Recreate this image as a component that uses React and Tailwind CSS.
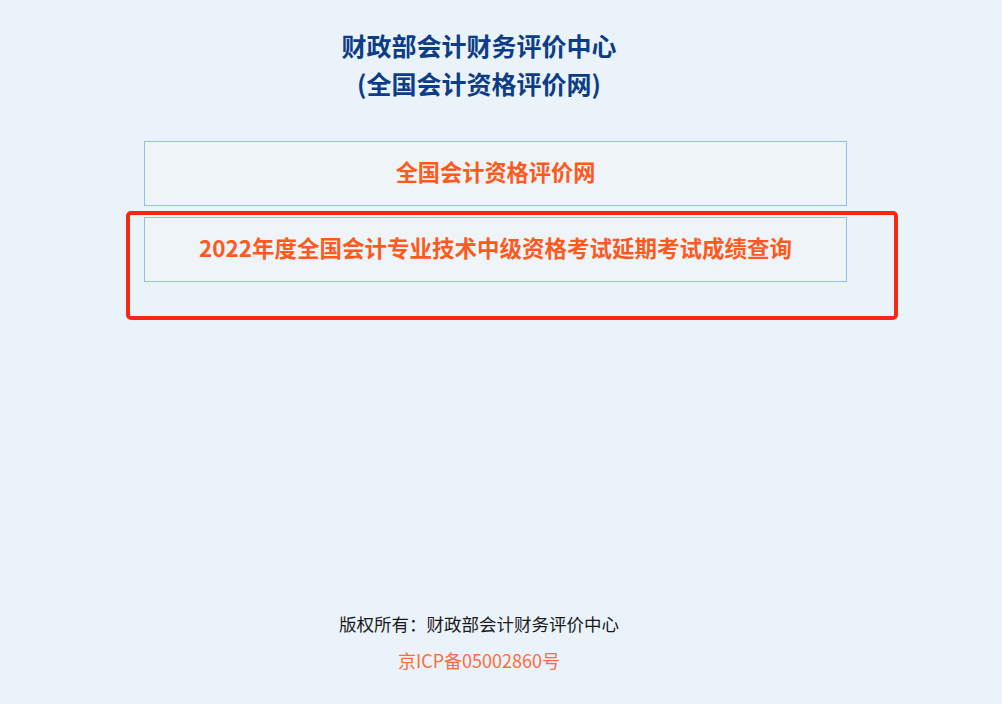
export default function App() {
  const font = { fontFamily: '"Noto Sans CJK SC", "Noto Sans", sans-serif' };
  return (
    <div className="relative min-h-screen w-full bg-[#ebf3fa]" style={font}>
      <div className="w-[958px] pt-[26px] text-center">
        <div className="text-[25px] font-bold leading-[38px] text-[#0e3d87]">
          <div>财政部会计财务评价中心</div>
          <div>(全国会计资格评价网)</div>
        </div>
      </div>
      <div className="ml-[144px] mt-[39px] flex w-[703px] flex-col gap-[11px]">
        <div className="flex h-[65px] items-center justify-center border border-[#8fbfec] bg-[#eef4f8] pb-[3px] text-[22.2px] font-bold text-[#ff5a1e]">
          全国会计资格评价网
        </div>
        <div className="flex h-[65px] items-center justify-center border border-[#8fbfec] bg-[#eef4f8] pb-[3px] text-[22.5px] font-bold text-[#ff5a1e]">
          2022年度全国会计专业技术中级资格考试延期考试成绩查询
        </div>
      </div>
      <div className="mt-[323px] w-[958px] pb-[24px] text-center leading-[37px]">
        <div className="text-[17.5px] text-[#1a1a1a]">版权所有：财政部会计财务评价中心</div>
        <div className="text-[18px] text-[#ff6b3d]">京ICP备05002860号</div>
      </div>
      <div className="pointer-events-none absolute left-[126px] top-[211px] h-[109px] w-[772px] rounded-[5px] border-[4px] border-[#ff2418]"></div>
    </div>
  );
}
